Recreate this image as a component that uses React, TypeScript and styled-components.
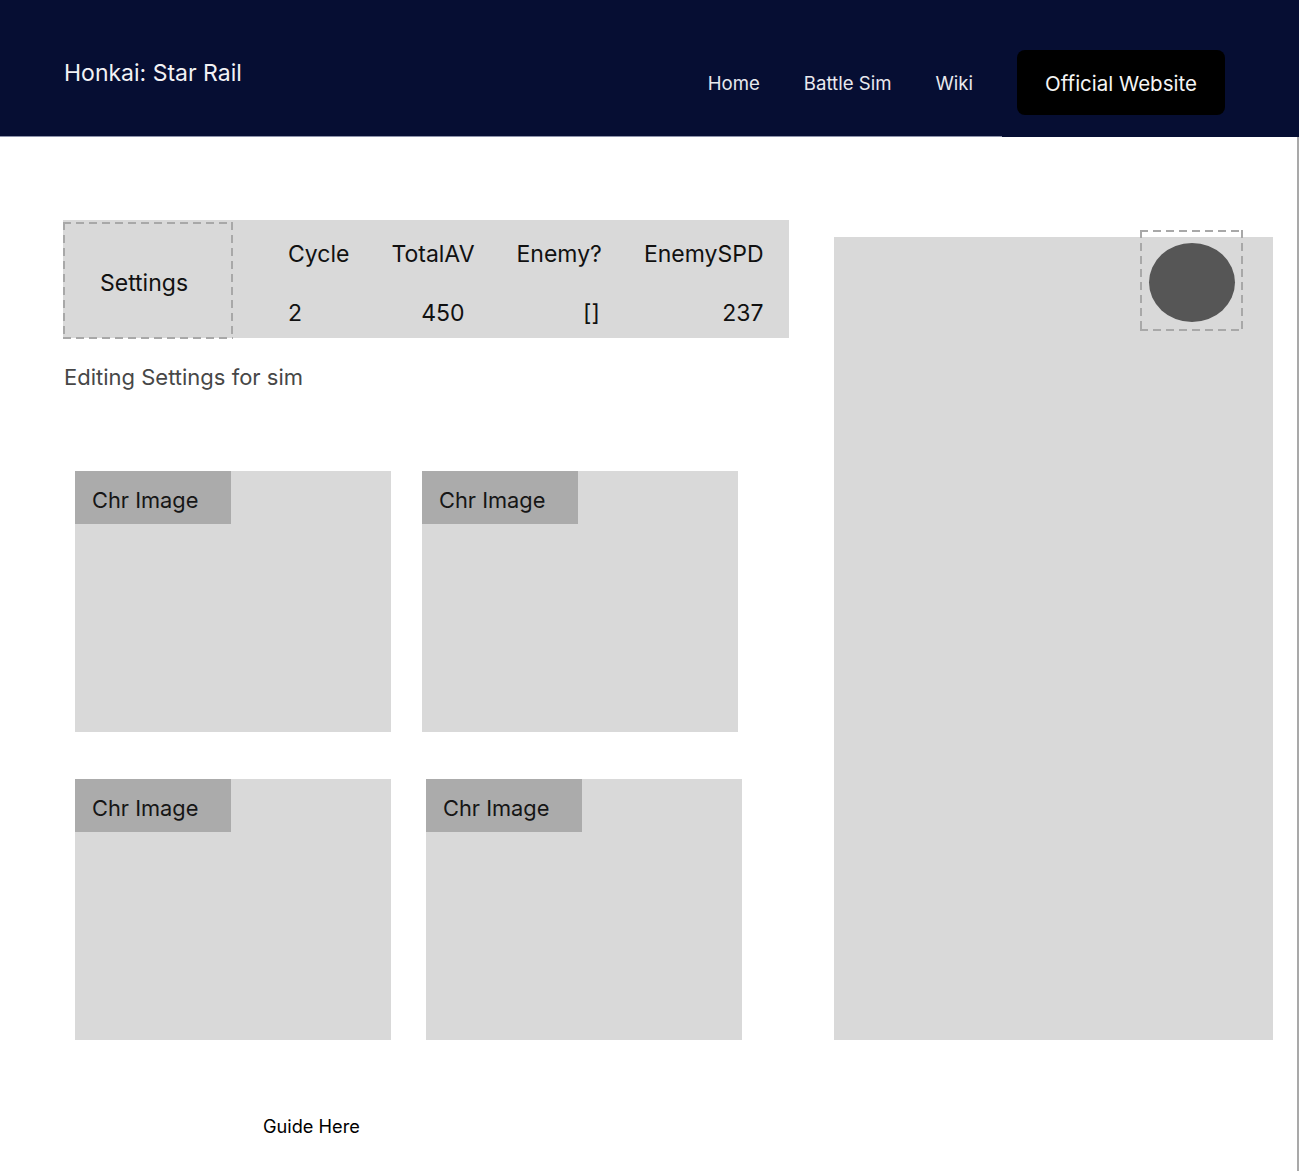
import React from "react";
import styled, { createGlobalStyle, css } from "styled-components";

const Global = createGlobalStyle`
  html, body { margin: 0; padding: 0; background: #ffffff; }
  body { font-family: Inter, "Noto Sans", "Liberation Sans", sans-serif; color: #000; }
  * { box-sizing: border-box; }
`;

const dashed = (color: string, w: number) => css`
  background-image:
    repeating-linear-gradient(90deg, ${color} 0 8px, transparent 8px 13px),
    repeating-linear-gradient(90deg, ${color} 0 8px, transparent 8px 13px),
    repeating-linear-gradient(180deg, ${color} 0 8px, transparent 8px 13px),
    repeating-linear-gradient(180deg, ${color} 0 8px, transparent 8px 13px);
  background-size: 100% ${w}px, 100% ${w}px, ${w}px 100%, ${w}px 100%;
  background-position: 0 0, 0 100%, 0 0, 100% 0;
  background-repeat: no-repeat;
`;

const Page = styled.div`
  width: 1299px;
  min-height: 1171px;
  display: flex;
  flex-direction: column;
`;

const Header = styled.header`
  height: 137px;
  display: flex;
  align-items: flex-start;
  justify-content: space-between;
  padding: 50px 74px 0 64px;
  background:
    linear-gradient(#8d92aa, #8d92aa) no-repeat 0 100% / 1002px 1px,
    #060e33;
`;

const Brand = styled.div`
  margin-top: 10px;
  font-size: 23px;
  line-height: 26px;
  color: #f2f2f5;
  font-weight: 400;
`;

const Nav = styled.nav`
  display: flex;
  align-items: center;
  height: 65px;
  gap: 44px;
`;

const NavLink = styled.a`
  font-size: 18.6px;
  color: #e9e9ee;
  text-decoration: none;
  line-height: 22px;
`;

const CtaButton = styled.button`
  width: 208px;
  height: 65px;
  border: none;
  border-radius: 8px;
  background: #000;
  color: #f5f5f5;
  font-family: inherit;
  font-size: 20.5px;
  padding: 2px 0 0;
  display: flex;
  align-items: center;
  justify-content: center;
`;

const Body = styled.main`
  flex: 1;
  display: flex;
  align-items: flex-start;
  gap: 44px;
  padding: 83px 0 0 63px;
  border-right: 2px solid #a9a9a9;
`;

const LeftColumn = styled.section`
  width: 727px;
  display: flex;
  flex-direction: column;
`;

const StatsBar = styled.div`
  width: 726px;
  height: 118px;
  background: #d9d9d9;
  display: flex;
  align-items: flex-start;
`;

const SettingsBox = styled.div`
  width: 170px;
  height: 117px;
  margin-top: 2px;
  margin-bottom: -1px;
  display: flex;
  align-items: center;
  justify-content: center;
  padding: 5px 8px 0 0;
  font-size: 23px;
  color: #111;
  ${dashed("#a8a8a8", 2)}
`;

const StatsGrid = styled.div`
  display: grid;
  grid-template-columns: auto auto auto auto;
  column-gap: 42px;
  row-gap: 33px;
  padding: 21px 0 0 55px;
  font-size: 23px;
  line-height: 26px;
  color: #111;
`;

const Cell = styled.div<{ $align?: "start" | "end"; $pad?: number }>`
  justify-self: ${(p) => p.$align ?? "start"};
  padding-right: ${(p) => p.$pad ?? 0}px;
`;

const Caption = styled.p`
  margin: 27px 0 0 1px;
  font-size: 22px;
  line-height: 24px;
  color: #474747;
`;

const CardGrid = styled.div`
  display: grid;
  grid-template-columns: 316px 316px;
  column-gap: 31px;
  row-gap: 47px;
  margin: 82px 0 0 12px;
`;

const Card = styled.div<{ $shift?: number }>`
  width: 316px;
  height: 261px;
  background: #d9d9d9;
  margin-left: ${(p) => p.$shift ?? 0}px;
`;

const CardLabel = styled.div`
  width: 156px;
  height: 53px;
  background: #ababab;
  display: flex;
  align-items: center;
  padding: 4px 0 0 17px;
  font-size: 21.8px;
  color: #161616;
`;

const Guide = styled.div`
  margin: 75px 0 0 200px;
  font-size: 18.2px;
  line-height: 22px;
  color: #000;
`;

const SidePanel = styled.aside`
  position: relative;
  width: 439px;
  height: 803px;
  margin-top: 17px;
  background: #d9d9d9;
`;

const AvatarFrame = styled.div`
  position: absolute;
  left: 306px;
  top: -7px;
  width: 103px;
  height: 101px;
  display: flex;
  justify-content: center;
  padding: 13px 0 0 1px;
  ${dashed("#a8a8a8", 2)}
`;

const Avatar = styled.div`
  width: 86px;
  height: 79px;
  border-radius: 50%;
  background: #565656;
`;

const stats = [
  { label: "Cycle", value: "2", align: "start" as const, pad: 0 },
  { label: "TotalAV", value: "450", align: "end" as const, pad: 10 },
  { label: "Enemy?", value: "[]", align: "end" as const, pad: 2 },
  { label: "EnemySPD", value: "237", align: "end" as const, pad: 0 },
];

export default function App() {
  return (
    <Page>
      <Global />
      <Header>
        <Brand>Honkai: Star Rail</Brand>
        <Nav>
          <NavLink>Home</NavLink>
          <NavLink>Battle Sim</NavLink>
          <NavLink>Wiki</NavLink>
          <CtaButton>Official Website</CtaButton>
        </Nav>
      </Header>
      <Body>
        <LeftColumn>
          <StatsBar>
            <SettingsBox>Settings</SettingsBox>
            <StatsGrid>
              {stats.map((s) => (
                <Cell key={s.label}>{s.label}</Cell>
              ))}
              {stats.map((s) => (
                <Cell key={s.label + "v"} $align={s.align} $pad={s.pad}>
                  {s.value}
                </Cell>
              ))}
            </StatsGrid>
          </StatsBar>
          <Caption>Editing Settings for sim</Caption>
          <CardGrid>
            <Card><CardLabel>Chr Image</CardLabel></Card>
            <Card><CardLabel>Chr Image</CardLabel></Card>
            <Card><CardLabel>Chr Image</CardLabel></Card>
            <Card $shift={4}><CardLabel>Chr Image</CardLabel></Card>
          </CardGrid>
          <Guide>Guide Here</Guide>
        </LeftColumn>
        <SidePanel>
          <AvatarFrame>
            <Avatar />
          </AvatarFrame>
        </SidePanel>
      </Body>
    </Page>
  );
}
